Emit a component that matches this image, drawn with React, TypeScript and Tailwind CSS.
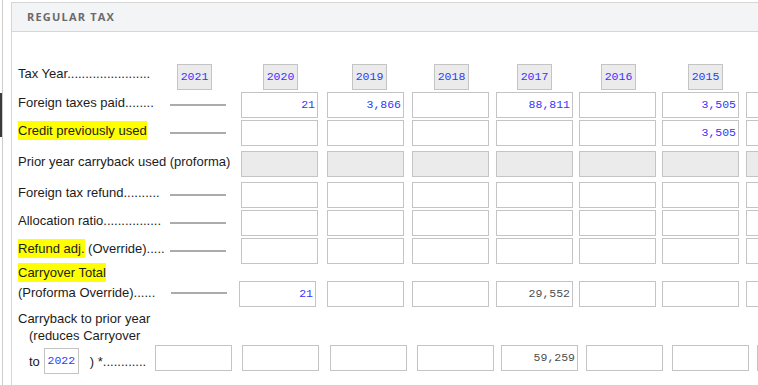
import React from "react";

const GRID = "grid grid-cols-[150px_73px_86px_85px_84px_83px_83px_84px_84px]";
const GRID8 = "grid grid-cols-[137px_87px_88px_87px_84px_85px_86px_85px_85px]";

type Tone = "blue" | "grey";

function Box({
  value = "",
  grey = false,
  tone = "blue",
  className = "",
}: {
  value?: string;
  grey?: boolean;
  tone?: Tone;
  className?: string;
}) {
  return (
    <div
      className={`h-[26px] w-[77px] border border-[#c4c4c4] flex items-center justify-end pr-[2px] font-['Liberation_Mono',monospace] text-[11.5px] leading-none ${
        grey ? "bg-[#ebebeb]" : "bg-white"
      } ${tone === "grey" ? "text-[#4d4d4d]" : "text-[#3434ff]"} ${className}`}
    >
      {value}
    </div>
  );
}

function Line({ className = "ml-[2px]" }: { className?: string }) {
  return <div className={`h-[2px] w-[56px] bg-[#ababab] ${className}`} />;
}

function YearHead({ year, className }: { year: string; className: string }) {
  return (
    <div
      className={`h-[26px] w-[35px] border border-[#c4c4c4] bg-[#ebebeb] flex items-center justify-center font-['Liberation_Mono',monospace] text-[11.5px] leading-none text-[#3434ff] ${className}`}
    >
      {year}
    </div>
  );
}

function Hl({ children }: { children: React.ReactNode }) {
  return <span className="bg-[#ffff00] py-[2px]">{children}</span>;
}

function DataRow({
  label,
  line = true,
  values = ["", "", "", "", "", "", ""],
  grey = false,
  className = "",
}: {
  label: React.ReactNode;
  line?: boolean;
  values?: string[];
  grey?: boolean;
  className?: string;
}) {
  return (
    <div className={`${GRID} h-[26px] ${className}`}>
      <div className="self-start mt-[3px] leading-[15px] whitespace-nowrap">{label}</div>
      <div className="flex items-center">{line ? <Line /> : null}</div>
      {values.map((v, i) => (
        <div key={i}>
          <Box value={v} grey={grey} />
        </div>
      ))}
    </div>
  );
}

export default function App() {
  return (
    <div className="w-[758px] h-[385px] overflow-hidden bg-white flex font-['Liberation_Sans',Arial,sans-serif] text-[13px] text-[#1c1c1c]">
      {/* left window edge */}
      <div className="w-[11px] shrink-0 flex">
        <div className="w-[2px] pt-[93px]">
          <div className="h-[44px] bg-[#3b3b3b]" />
        </div>
        <div className="w-px bg-[#cdcdcd]" />
      </div>

      {/* panel */}
      <div className="mt-[2px] shrink-0 w-[830px] border-l border-t border-[#d6d6d6]">
        <div className="h-[29px] bg-[#f3f4f6] border-b border-[#d6d6d6] flex items-center pl-[15px] font-['Open_Sans',sans-serif] text-[11px] font-bold tracking-[1.2px] text-[#6a6a6a]">
          REGULAR TAX
        </div>

        <div className="pl-[6px] pt-[32px]">
          {/* tax year header row */}
          <div className={`${GRID} h-[26px]`}>
            <div className="self-start mt-[2px] leading-[15px] whitespace-nowrap">Tax Year.......................</div>
            <div>
              <YearHead year="2021" className="ml-[9px]" />
            </div>
            <div>
              <YearHead year="2020" className="ml-[22px]" />
            </div>
            <div>
              <YearHead year="2019" className="ml-[25px]" />
            </div>
            <div>
              <YearHead year="2018" className="ml-[22px]" />
            </div>
            <div>
              <YearHead year="2017" className="ml-[21px]" />
            </div>
            <div>
              <YearHead year="2016" className="ml-[22px]" />
            </div>
            <div>
              <YearHead year="2015" className="ml-[26px]" />
            </div>
            <div />
          </div>

          <DataRow
            className="mt-[2px]"
            label="Foreign taxes paid........"
            values={["21", "3,866", "", "88,811", "", "3,505", ""]}
          />
          <DataRow
            className="mt-[2px]"
            label={<Hl>Credit previously used</Hl>}
            values={["", "", "", "", "", "3,505", ""]}
          />
          <DataRow
            className="mt-[5px]"
            label="Prior year carryback used (proforma)"
            line={false}
            grey
          />
          <DataRow className="mt-[5px]" label="Foreign tax refund.........." />
          <DataRow className="mt-[2px]" label="Allocation ratio................" />
          <DataRow
            className="mt-[2px]"
            label={
              <>
                <Hl>Refund adj.</Hl> (Override).....
              </>
            }
          />

          {/* carryover total */}
          <div className={`${GRID} items-start`}>
            <div className="-mt-[1px] leading-[20px] whitespace-nowrap">
              <div>
                <Hl>Carryover Total</Hl>
              </div>
              <div>(Proforma Override)......</div>
            </div>
            <div className="pt-[28px]">
              <Line className="ml-[3px]" />
            </div>
            {["21", "", "", "29,552", "", "", ""].map((v, i) => (
              <div key={i} className="pt-[17px]">
                <Box value={v} tone={i === 3 ? "grey" : "blue"} className={i === 0 ? "-ml-[2px]" : ""} />
              </div>
            ))}
          </div>

          {/* carryback */}
          <div className={`${GRID8} mt-[3px] items-start`}>
            <div className="whitespace-nowrap">
              <div className="leading-[17px]">Carryback to prior year</div>
              <div className="leading-[17px] pl-[11px]">(reduces Carryover</div>
              <div className="mt-[4px] h-[26px] pl-[11px] flex items-center leading-[15px]">
                <span>to</span>
                <div className="ml-[4px] h-[26px] w-[35px] border border-[#c4c4c4] bg-white flex items-center justify-center font-['Liberation_Mono',monospace] text-[11.5px] leading-none text-[#3434ff]">
                  2022
                </div>
                <span className="ml-[11px]">) *............</span>
              </div>
            </div>
            {["", "", "", "", "59,259", "", "", ""].map((v, i) => (
              <div key={i} className="pt-[35px]">
                <Box value={v} tone="grey" />
              </div>
            ))}
          </div>
        </div>
      </div>
    </div>
  );
}
